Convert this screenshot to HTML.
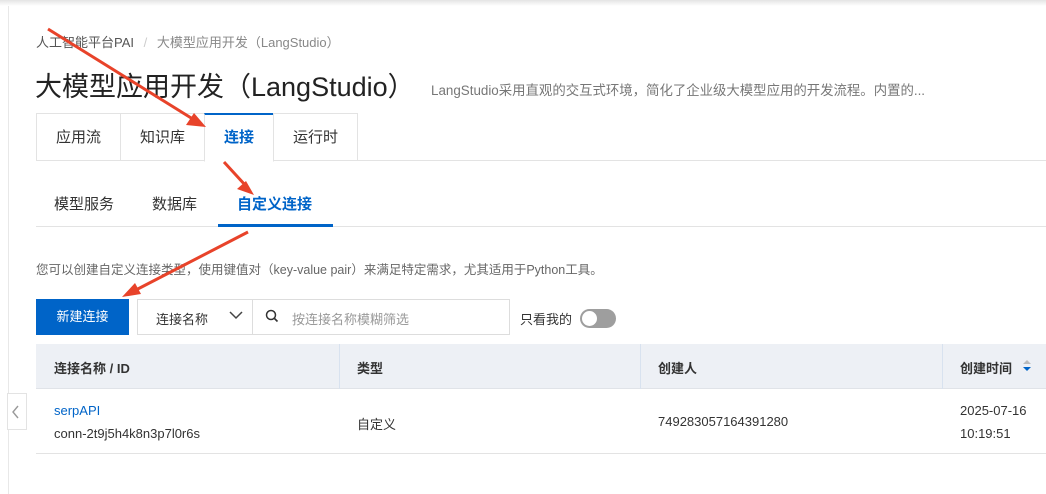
<!DOCTYPE html>
<html><head><meta charset="utf-8"><style>
*{margin:0;padding:0;box-sizing:border-box}
body{width:1046px;height:494px;overflow:hidden;background:#fff;font-family:"Liberation Sans","Noto Sans CJK SC",sans-serif;color:#333;position:relative}
.a{position:absolute;white-space:nowrap}
.tab{position:absolute;top:113px;height:48px;border:1px solid #e3e3e3;font-size:15px;line-height:48px;text-align:center;background:#fff}
</style></head><body>
<div class="a" style="left:0;top:0;width:1046px;height:6px;background:linear-gradient(#e4e4e4,#fff)"></div>
<div class="a" style="left:8px;top:6px;width:1px;height:488px;background:#e8e8e8"></div>
<div class="a" style="left:36px;top:32px;font-size:13px;color:#555">人工智能平台PAI <span style="color:#ccc;margin:0 6px">/</span> <span style="color:#888">大模型应用开发（LangStudio）</span></div>
<div class="a" style="left:35px;top:65px;font-size:27px;color:#222">大模型应用开发（LangStudio）</div>
<div class="a" style="left:431px;top:79px;font-size:13.4px;color:#777">LangStudio采用直观的交互式环境，简化了企业级大模型应用的开发流程。内置的...</div>
<div class="a" style="left:36px;top:160px;width:1010px;height:1px;background:#e3e3e3"></div>
<div class="tab" style="left:36px;width:85px">应用流</div>
<div class="tab" style="left:120px;width:85px">知识库</div>
<div class="tab" style="left:204px;width:70px;border-top:2px solid #0064c8;border-bottom-color:#fff;color:#0064c8;font-weight:bold;line-height:46px;height:49px">连接</div>
<div class="tab" style="left:273px;width:85px">运行时</div>
<div class="a" style="left:54px;top:193px;font-size:15px">模型服务</div>
<div class="a" style="left:152px;top:193px;font-size:15px">数据库</div>
<div class="a" style="left:237px;top:193px;font-size:15px;color:#0064c8;font-weight:bold">自定义连接</div>
<div class="a" style="left:36px;top:226px;width:1010px;height:1px;background:#e3e3e3"></div>
<div class="a" style="left:218px;top:224px;width:115px;height:3px;background:#0064c8"></div>
<div class="a" style="left:36px;top:259px;font-size:12.5px;color:#666">您可以创建自定义连接类型，使用键值对（key-value pair）来满足特定需求，尤其适用于Python工具。</div>
<div class="a" style="left:36px;top:299px;width:93px;height:36px;background:#0064c8;color:#fff;font-size:13px;line-height:36px;text-align:center">新建连接</div>
<div class="a" style="left:137px;top:299px;width:373px;height:36px;border:1px solid #ddd"></div>
<div class="a" style="left:252px;top:299px;width:1px;height:36px;background:#ddd"></div>
<div class="a" style="left:156px;top:309px;font-size:13px">连接名称</div>
<svg class="a" style="left:229px;top:310px" width="14" height="10"><path d="M1 2l6 6 6-6" fill="none" stroke="#444" stroke-width="1.5"/></svg>
<svg class="a" style="left:265px;top:309px" width="14" height="14"><circle cx="6" cy="6" r="4.5" fill="none" stroke="#333" stroke-width="1.5"/><path d="M9.5 9.5l3 3" stroke="#333" stroke-width="1.6"/></svg>
<div class="a" style="left:292px;top:309px;font-size:13px;color:#999">按连接名称模糊筛选</div>
<div class="a" style="left:520px;top:309px;font-size:13px">只看我的</div>
<div class="a" style="left:580px;top:309px;width:36px;height:19px;border-radius:10px;background:#9e9e9e"><div style="position:absolute;left:2px;top:2px;width:15px;height:15px;border-radius:50%;background:#fff"></div></div>
<div class="a" style="left:36px;top:344px;width:1010px;height:45px;background:#edf0f5;border-bottom:1px solid #e0e3e8"></div>
<div class="a" style="left:339px;top:344px;width:1px;height:45px;background:#d8e2ef"></div>
<div class="a" style="left:640px;top:344px;width:1px;height:45px;background:#d8e2ef"></div>
<div class="a" style="left:942px;top:344px;width:1px;height:45px;background:#d8e2ef"></div>
<div class="a" style="left:54px;top:358px;font-size:13px;font-weight:bold">连接名称 / ID</div>
<div class="a" style="left:357px;top:358px;font-size:13px;font-weight:bold">类型</div>
<div class="a" style="left:658px;top:358px;font-size:13px;font-weight:bold">创建人</div>
<div class="a" style="left:960px;top:358px;font-size:13px;font-weight:bold">创建时间</div>
<svg class="a" style="left:1022px;top:359px" width="10" height="14"><path d="M1 5l4-4 4 4z" fill="#bbb"/><path d="M1 8l4 4 4-4z" fill="#0064c8"/></svg>
<div class="a" style="left:36px;top:453px;width:1010px;height:1px;background:#e3e3e3"></div>
<div class="a" style="left:54px;top:403px;font-size:13px;color:#0064c8">serpAPI</div>
<div class="a" style="left:54px;top:426px;font-size:13px">conn-2t9j5h4k8n3p7l0r6s</div>
<div class="a" style="left:357px;top:414px;font-size:13px">自定义</div>
<div class="a" style="left:658px;top:414px;font-size:13px">749283057164391280</div>
<div class="a" style="left:960px;top:403px;font-size:13px">2025-07-16</div>
<div class="a" style="left:960px;top:426px;font-size:13px">10:19:51</div>
<div class="a" style="left:7px;top:393px;width:20px;height:37px;border:1px solid #e3e3e3;background:#fff"></div>
<svg class="a" style="left:11px;top:404px" width="10" height="16"><path d="M7 2l-5 6 5 6" fill="none" stroke="#999" stroke-width="1.4"/></svg>
<svg class="a" style="left:0;top:0" width="1046" height="494">
<g stroke="#e8432a" stroke-width="3" fill="#e8432a">
<line x1="48" y1="29" x2="196" y2="121"/><path d="M206 127l-20-2 8-12z" stroke="none"/>
<line x1="224" y1="162" x2="246" y2="186"/><path d="M254 195l-17-6 9-8z" stroke="none"/>
<line x1="248" y1="232" x2="132" y2="292"/><path d="M122 297l13-14 6 11z" stroke="none"/>
</g></svg>
</body></html>
